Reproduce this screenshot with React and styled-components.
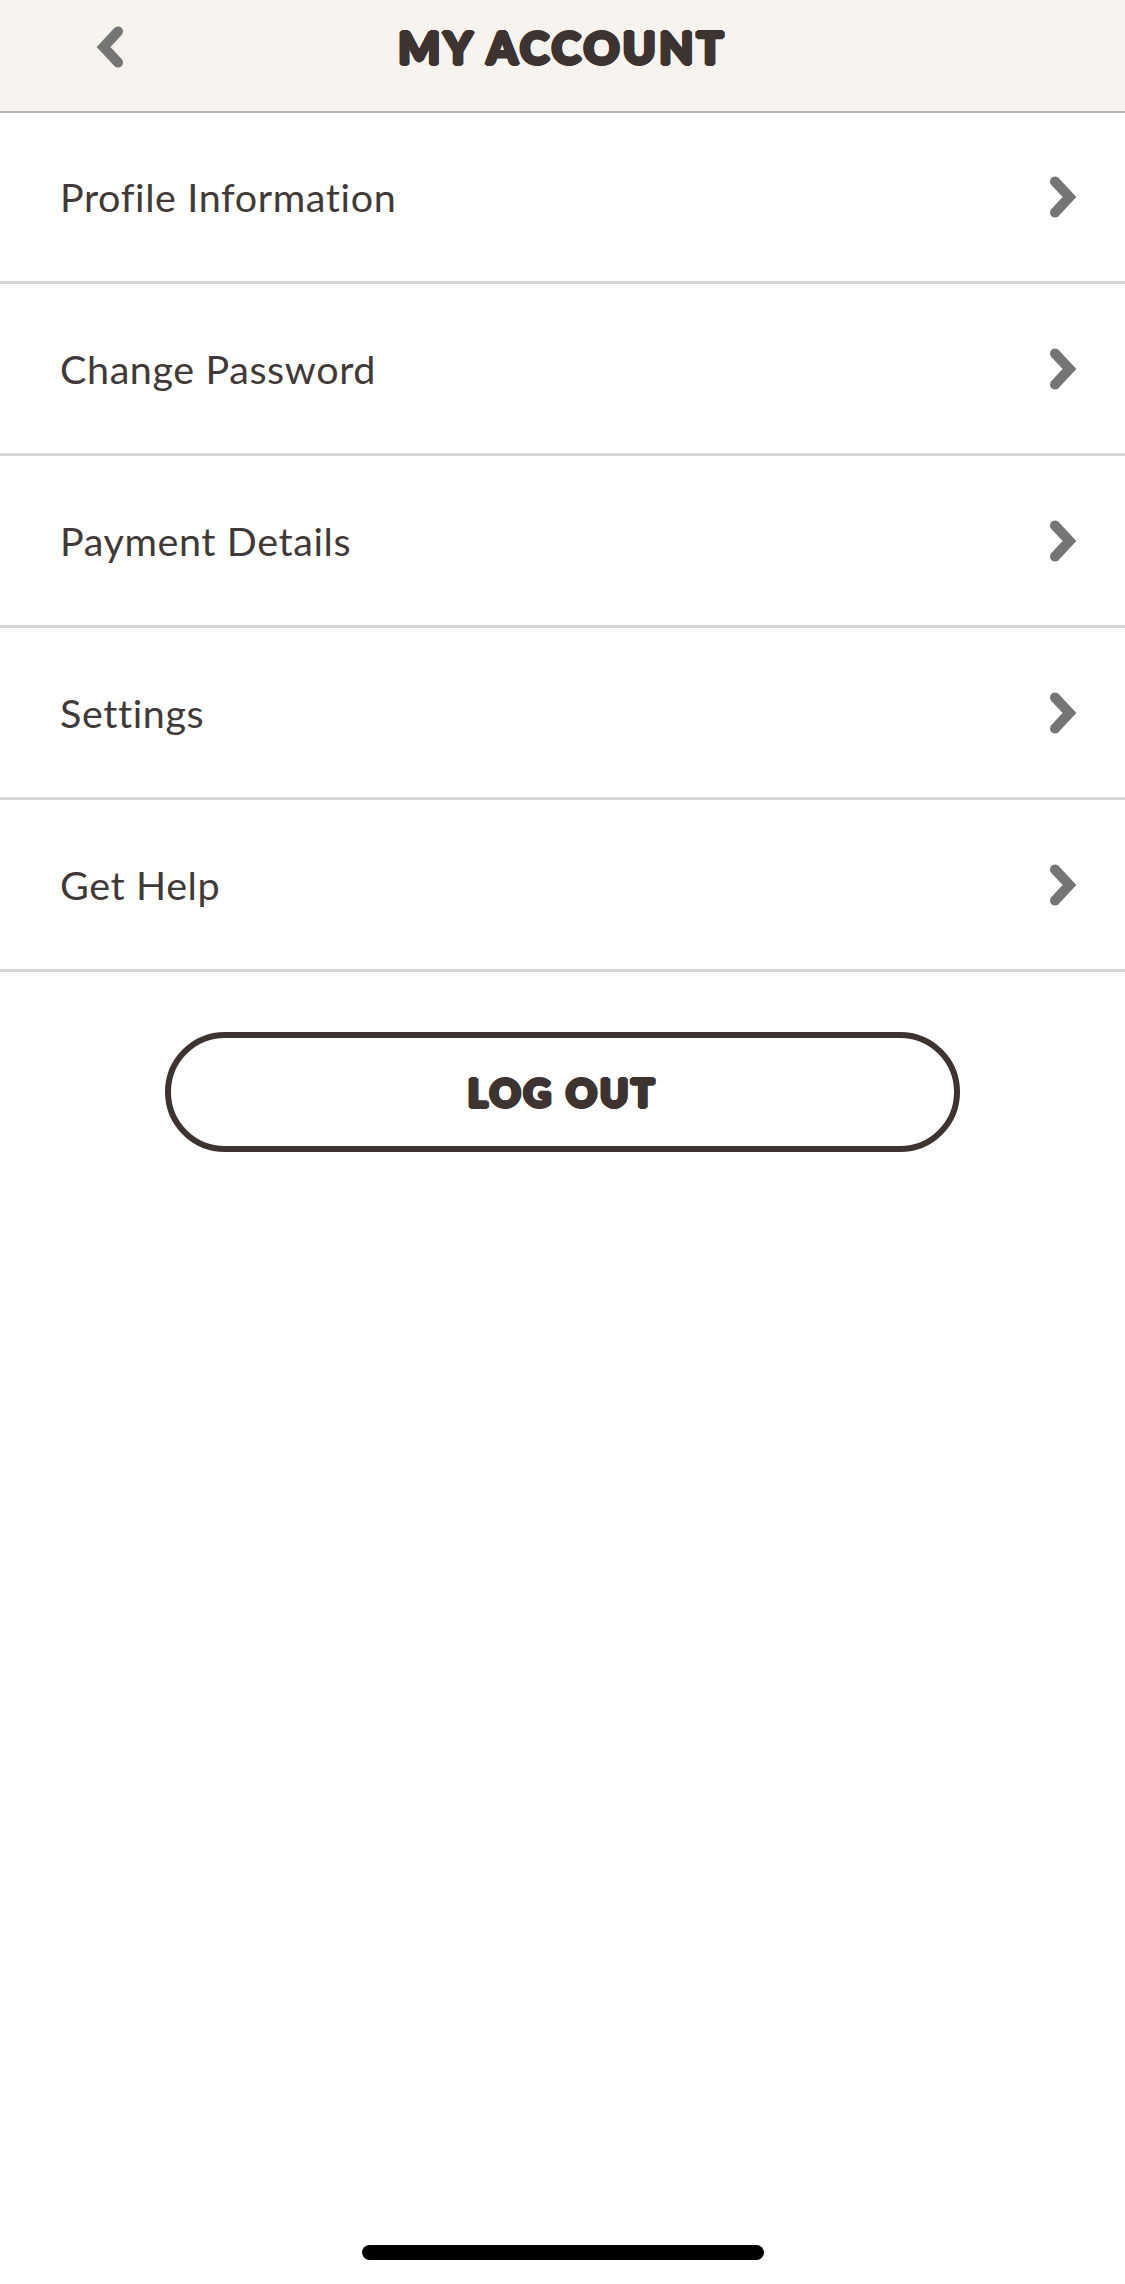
import React from 'react';
import styled, { createGlobalStyle } from 'styled-components';

const GlobalStyle = createGlobalStyle`
  html, body {
    margin: 0;
    padding: 0;
    background: #ffffff;
  }
`

// fattens the letters and rounds their corners, the real logo font is not available
const roundedShadow = `
  2px 0 0 #3d3331, -2px 0 0 #3d3331, 0 2px 0 #3d3331, 0 -2px 0 #3d3331,
  1.4px 1.4px 0 #3d3331, -1.4px 1.4px 0 #3d3331, 1.4px -1.4px 0 #3d3331, -1.4px -1.4px 0 #3d3331
`

const Page = styled.div`
  width: 1125px;
  height: 2284px;
  display: flex;
  flex-direction: column;
  background: #ffffff;
  overflow: hidden;
`

const Header = styled.header`
  box-sizing: border-box;
  height: 113px;
  flex-shrink: 0;
  display: grid;
  grid-template-columns: 1fr auto 1fr;
  align-items: center;
  background: #f7f4f0;
  border-bottom: 2px solid #b4b4b2;
`

const BackButton = styled.div`
  display: flex;
  margin-left: 96px;
  margin-bottom: 18px;
`

const Title = styled.h1`
  margin: 0 0 17px;
  font-family: Lato, "Liberation Sans", sans-serif;
  font-size: 44px;
  line-height: 50px;
  font-weight: 900;
  letter-spacing: 3.5px;
  color: #3d3331;
  text-shadow: ${roundedShadow};
`

const Menu = styled.div`
  margin-top: -1px;
  display: flex;
  flex-direction: column;
`

const Row = styled.div`
  box-sizing: border-box;
  height: 172px;
  display: flex;
  align-items: center;
  justify-content: space-between;
  padding: 0 48px 0 60px;
  border-bottom: 3px solid #d4d4d4;
`

const RowLabel = styled.span`
  font-family: Lato, "Liberation Sans", sans-serif;
  font-size: 39.5px;
  font-weight: 400;
  font-variant-ligatures: none;
  letter-spacing: 0.6px;
  color: #3f3a38;
`

const Chevron = styled.svg`
  display: block;
  width: 28px;
  height: 42px;
  fill: none;
  stroke: #757575;
  stroke-width: 10;
  stroke-linecap: round;
  stroke-linejoin: miter;
  transform: ${(props) => (props.$back ? 'scaleX(-1)' : 'none')};
`

const LogOutButton = styled.button`
  box-sizing: border-box;
  align-self: center;
  width: 795px;
  height: 120px;
  margin-top: 60px;
  padding: 0;
  background: #ffffff;
  border: 6px solid #3d3331;
  border-radius: 60px;
  font-family: Lato, "Liberation Sans", sans-serif;
  font-size: 38px;
  font-weight: 900;
  letter-spacing: 3px;
  color: #3d3331;
  text-shadow: ${roundedShadow};
`

const HomeBar = styled.div`
  align-self: center;
  width: 402px;
  height: 15px;
  margin-top: auto;
  margin-bottom: 24px;
  border-radius: 8px;
  background: #000000;
`

const ChevronIcon = ({ back }) => (
  <Chevron $back={back} viewBox="0 0 28 42">
    <path d="M6 5.5 L20.5 21 L6 36.5" />
  </Chevron>
);

const items = ['Profile Information', 'Change Password', 'Payment Details', 'Settings', 'Get Help'];

const App = () => (
  <Page>
    <GlobalStyle />
    <Header>
      <BackButton>
        <ChevronIcon back />
      </BackButton>
      <Title>MY ACCOUNT</Title>
    </Header>
    <Menu>
      {items.map((item) => (
        <Row key={item}>
          <RowLabel>{item}</RowLabel>
          <ChevronIcon />
        </Row>
      ))}
    </Menu>
    <LogOutButton>LOG OUT</LogOutButton>
    <HomeBar />
  </Page>
);

export default App;
